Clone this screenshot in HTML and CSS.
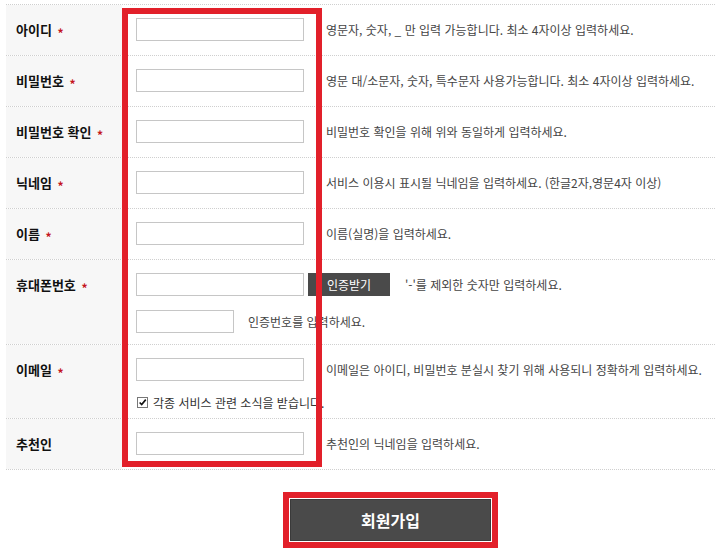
FILE: index.html
```html
<!DOCTYPE html>
<html lang="ko">
<head>
  <meta charset="UTF-8" />
  <meta name="viewport" content="width=device-width, initial-scale=1.0"/>
  <title>회원가입</title>
  <link rel="stylesheet" href="styles.css">
</head>
<body>
  <div class="join">
    <div class="join-form">
      <div class="row">
        <div class="row-label">아이디 <span class="req">*</span></div>
        <div class="row-body">
          <div class="line">
            <input type="text" class="text">
            <span class="hint">영문자, 숫자, _ 만 입력 가능합니다. 최소 4자이상 입력하세요.</span>
          </div>
        </div>
      </div>

      <div class="row">
        <div class="row-label">비밀번호 <span class="req">*</span></div>
        <div class="row-body">
          <div class="line">
            <input type="password" class="text">
            <span class="hint">영문 대/소문자, 숫자, 특수문자 사용가능합니다. 최소 4자이상 입력하세요.</span>
          </div>
        </div>
      </div>

      <div class="row">
        <div class="row-label">비밀번호 확인 <span class="req">*</span></div>
        <div class="row-body">
          <div class="line">
            <input type="password" class="text">
            <span class="hint">비밀번호 확인을 위해 위와 동일하게 입력하세요.</span>
          </div>
        </div>
      </div>

      <div class="row">
        <div class="row-label">닉네임 <span class="req">*</span></div>
        <div class="row-body">
          <div class="line">
            <input type="text" class="text">
            <span class="hint">서비스 이용시 표시될 닉네임을 입력하세요. (한글2자,영문4자 이상)</span>
          </div>
        </div>
      </div>

      <div class="row">
        <div class="row-label">이름 <span class="req">*</span></div>
        <div class="row-body">
          <div class="line">
            <input type="text" class="text">
            <span class="hint">이름(실명)을 입력하세요.</span>
          </div>
        </div>
      </div>

      <div class="row">
        <div class="row-label">휴대폰번호 <span class="req">*</span></div>
        <div class="row-body row-phone">
          <div class="line">
            <input type="text" class="text">
            <button type="button" class="btn-auth">인증받기</button>
            <span class="hint hint-auth">'-'를 제외한 숫자만 입력하세요.</span>
          </div>
          <div class="line">
            <input type="text" class="text short">
            <span class="hint hint-short">인증번호를 입력하세요.</span>
          </div>
        </div>
      </div>

      <div class="row">
        <div class="row-label">이메일 <span class="req">*</span></div>
        <div class="row-body row-email">
          <div class="line">
            <input type="text" class="text">
            <span class="hint">이메일은 아이디, 비밀번호 분실시 찾기 위해 사용되니 정확하게 입력하세요.</span>
          </div>
          <label class="check-line">
            <span class="check-box">
              <svg width="11" height="11" viewBox="0 0 11 11"><path d="M2 5.5 L4.5 8 L9.5 2" fill="none" stroke="#111" stroke-width="2"/></svg>
            </span>
            <span class="check-text">각종 서비스 관련 소식을 받습니다.</span>
          </label>
        </div>
      </div>

      <div class="row">
        <div class="row-label">추천인</div>
        <div class="row-body">
          <div class="line">
            <input type="text" class="text">
            <span class="hint">추천인의 닉네임을 입력하세요.</span>
          </div>
        </div>
      </div>

      <div class="highlight"></div>
    </div>

    <div class="actions">
      <div class="submit-frame">
        <button type="submit" class="submit">회원가입</button>
      </div>
    </div>
  </div>
</body>
</html>
```

FILE: styles.css
```css
body {
  margin: 0;
  font-family: "Noto Sans CJK KR", "Noto Sans", sans-serif;
  font-size: 12px;
  color: #444;
  background: #fff;
}
.join {
  padding: 4px 2px 0 6px;
}
.join-form {
  position: relative;
  width: 709px;
  border-bottom: 1px dotted #cfcfcf;
}
.row {
  display: flex;
  border-top: 1px dotted #cfcfcf;
}
.row-label {
  width: 106px;
  padding: 13px 0 0 10px;
  background: #f7f7f7;
  color: #111;
  font-size: 13px;
  font-weight: bold;
  line-height: 23px;
}
.req {
  margin-left: 2px;
  color: #c4161c;
  font-size: 12px;
  vertical-align: -3px;
}
.row-body {
  display: flex;
  flex-direction: column;
  gap: 14px;
  padding: 13px 0 14px 14px;
}
.row-phone {
  padding-bottom: 11px;
}
.row-email {
  gap: 13px;
  padding-bottom: 8px;
}
.line {
  display: flex;
  align-items: center;
  height: 23px;
}
.text {
  box-sizing: border-box;
  width: 168px;
  height: 23px;
  margin: 0;
  padding: 0 4px;
  border: 1px solid #c6c6c6;
  background: #fff;
}
.text.short {
  width: 98px;
}
.hint {
  margin-left: 22px;
  white-space: nowrap;
  line-height: 16px;
}
.hint-auth {
  margin-left: 15px;
}
.hint-short {
  margin-left: 14px;
}
.btn-auth {
  width: 82px;
  height: 23px;
  margin: 0 0 0 4px;
  padding: 0;
  border: 0;
  background: #4a4a4a;
  color: #fff;
  font: inherit;
}
.check-line {
  display: flex;
  align-items: center;
  height: 16px;
  color: #333;
}
.check-box {
  box-sizing: border-box;
  display: flex;
  align-items: center;
  justify-content: center;
  width: 11px;
  height: 11px;
  margin-left: 1px;
  border: 1px solid #777;
  background: #fff;
}
.check-box svg {
  display: block;
}
.check-text {
  margin-left: 5px;
  white-space: nowrap;
}
.highlight {
  position: absolute;
  left: 116px;
  top: 4px;
  box-sizing: border-box;
  width: 200px;
  height: 459px;
  border: 6px solid #e2202a;
  pointer-events: none;
}
.actions {
  display: flex;
  padding: 22px 0 0 277px;
}
.submit-frame {
  padding: 1px;
  border: 6px solid #e2202a;
}
.submit {
  display: block;
  width: 201px;
  height: 42px;
  margin: 0;
  border: 1px solid #3a3a3a;
  background: #4a4a4a;
  color: #fff;
  font: inherit;
  font-size: 16px;
  font-weight: bold;
  cursor: pointer;
}
```
